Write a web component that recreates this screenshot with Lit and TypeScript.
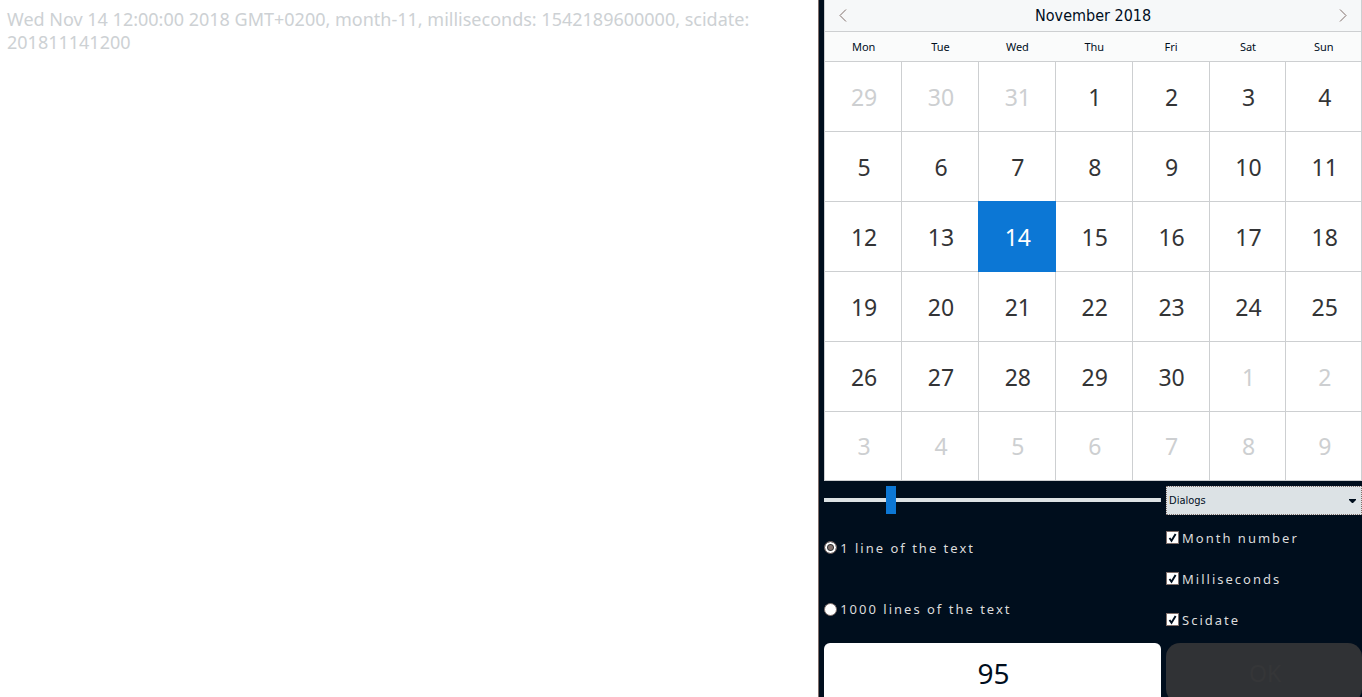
import { LitElement, html, css } from "lit";
import { customElement, state } from "lit/decorators.js";
import { classMap } from "lit/directives/class-map.js";

const WEEKDAYS = ["Mon", "Tue", "Wed", "Thu", "Fri", "Sat", "Sun"];

@customElement("month-calendar")
export class MonthCalendar extends LitElement {
  @state() selected = 14;

  static styles = css`
    :host {
      display: flex;
      flex-direction: column;
      background: #fff;
      color: #000e1d;
      border: 1px solid #cdcfd1;
      border-top: none;
    }
    .bar {
      display: flex;
      align-items: center;
      justify-content: space-between;
      height: 32px;
      box-sizing: border-box;
      padding: 0 12px;
      background: #f6f8f9;
      border-bottom: 1px solid #cdcfd1;
    }
    .title {
      margin: 0;
      font-family: Tahoma, "DejaVu Sans Condensed", sans-serif;
      font-size: 16px;
      line-height: 30px;
      font-weight: 400;
    }
    .nav {
      display: flex;
      border: none;
      background: none;
      padding: 0;
      width: 12px;
      justify-content: center;
    }
    table {
      width: 100%;
      flex: 1;
      table-layout: fixed;
      border-collapse: separate;
      border-spacing: 0;
    }
    th {
      width: 14.35%;
      height: 30px;
      box-sizing: border-box;
      padding: 0;
      background: #fafbfb;
      border-bottom: 1px solid #cdcfd1;
      font-size: 11px;
      font-weight: 400;
      line-height: 28px;
    }
    th:last-child {
      width: auto;
    }
    td {
      padding: 0;
      border-right: 1px solid #cdcfd1;
      border-bottom: 1px solid #cdcfd1;
    }
    td:last-child {
      border-right: none;
    }
    tbody tr:last-child td {
      border-bottom: none;
    }
    .day {
      display: block;
      width: 100%;
      height: 69px;
      border: none;
      padding: 0 0 0 2px;
      background: none;
      color: #333436;
      font: inherit;
      font-size: 23px;
    }
    tbody tr:last-child .day {
      height: 68px;
    }
    .day.other {
      color: #cdcfd1;
    }
    .day.selected {
      background: #0c77d5;
      color: #fff;
      box-shadow: 0 0 0 1px #0c77d5;
      position: relative;
    }
  `;

  private weeks() {
    const days = Array.from({ length: 42 }, (_, i) => {
      if (i < 3) return { n: 29 + i, other: true };
      if (i < 33) return { n: i - 2, other: false };
      return { n: i - 32, other: true };
    });
    return Array.from({ length: 6 }, (_, w) => days.slice(w * 7, w * 7 + 7));
  }

  render() {
    return html`
      <div class="bar">
        <button class="nav" aria-label="Previous month">
          <svg width="8" height="13" viewBox="0 0 8 13" fill="none" stroke="#806f6b">
            <path d="M7 .5 1 6.5 7 12.5" />
          </svg>
        </button>
        <h2 class="title">November 2018</h2>
        <button class="nav" aria-label="Next month">
          <svg width="8" height="13" viewBox="0 0 8 13" fill="none" stroke="#806f6b">
            <path d="M1 .5 7 6.5 1 12.5" />
          </svg>
        </button>
      </div>
      <table>
        <thead>
          <tr>${WEEKDAYS.map((d) => html`<th scope="col">${d}</th>`)}</tr>
        </thead>
        <tbody>
          ${this.weeks().map(
            (week) => html`<tr>
              ${week.map(
                ({ n, other }) => html`<td>
                  <button
                    class=${classMap({ day: true, other, selected: !other && n === this.selected })}
                    @click=${() => { if (!other) this.selected = n; }}
                  >${n}</button>
                </td>`
              )}
            </tr>`
          )}
        </tbody>
      </table>
    `;
  }
}

@customElement("app-root")
export class AppRoot extends LitElement {
  @state() size = 95;

  static styles = css`
    :host {
      display: grid;
      grid-template-columns: calc(60% + 1px) 1fr;
      height: 100vh;
      overflow: hidden;
      background: #fff;
      font-family: Tahoma, "Noto Sans", sans-serif;
    }
    .log {
      padding: 8px 7px;
      color: #cdd1d4;
      font-size: 18px;
      line-height: 23px;
    }
    .log p {
      margin: 0;
    }
    .side {
      background: #000e1d;
      border-left: 1px solid #806f6b;
      padding-left: 5px;
    }
    .controls {
      display: grid;
      grid-template-columns: 337fr 196fr;
      column-gap: 5px;
      padding-top: 5px;
    }
    .slider {
      appearance: none;
      width: 100%;
      height: 28px;
      margin: 0;
      background: linear-gradient(#dce2e5, #dce2e5) center / 100% 4px no-repeat;
    }
    .slider::-webkit-slider-thumb {
      appearance: none;
      width: 10px;
      height: 28px;
      background: #0c77d5;
    }
    .select {
      display: grid;
      align-items: center;
      height: 29px;
    }
    .select select,
    .select svg {
      grid-area: 1 / 1;
    }
    .select select {
      appearance: none;
      width: 100%;
      height: 29px;
      padding: 0 2px;
      border: 1px dotted #806f6b;
      border-radius: 0;
      background: #dce2e5;
      color: #000e1d;
      font-family: Tahoma, "DejaVu Sans Condensed", sans-serif;
      font-size: 11px;
    }
    .select svg {
      justify-self: end;
      margin-right: 6px;
      pointer-events: none;
    }
    .options {
      display: grid;
      grid-auto-rows: 1fr;
      height: 123px;
      margin: 2px 0 3px;
      padding: 0;
      border: none;
      min-width: 0;
    }
    .option {
      display: flex;
      align-items: center;
      gap: 3px;
      color: #dcdcdc;
      font-size: 13px;
      letter-spacing: 2px;
    }
    .option input {
      appearance: none;
      flex: none;
      width: 13px;
      height: 13px;
      margin: 0;
      border: 1px solid #806f6b;
      background: #fff;
    }
    .option input[type="radio"] {
      border-radius: 50%;
    }
    .option input[type="radio"]:checked {
      background: radial-gradient(circle, #806f6b 0 2px, #333436 3px, #fff 4px) padding-box;
    }
    .option input[type="checkbox"]:checked {
      background: #fff
        url("data:image/svg+xml,%3Csvg xmlns='http://www.w3.org/2000/svg' viewBox='0 0 11 11'%3E%3Cpath d='M2.5 6 4.5 8.8 8.6 2' fill='none' stroke='%23000e1d' stroke-width='1.9'/%3E%3C/svg%3E")
        center / 11px 11px no-repeat;
    }
    .value,
    .ok {
      box-sizing: border-box;
      width: 100%;
      height: 60px;
      border: none;
      padding: 0 0 0 2px;
      font-family: inherit;
      font-size: 28px;
      text-align: center;
    }
    .value {
      border-radius: 6px;
      background: #fff;
      color: #000e1d;
    }
    .ok {
      border-radius: 14px;
      background: #303235;
      color: #353638;
      font-size: 23px;
    }
  `;

  render() {
    return html`
      <main class="log">
        <p>Wed Nov 14 12:00:00 2018 GMT+0200, month-11, milliseconds: 1542189600000, scidate: 201811141200</p>
      </main>
      <aside class="side">
        <month-calendar></month-calendar>
        <div class="controls">
          <input
            class="slider"
            type="range"
            aria-label="Size"
            min="0"
            max="500"
            .value=${String(this.size)}
            @input=${(e: Event) => (this.size = Number((e.target as HTMLInputElement).value))}
          />
          <div class="select">
            <select aria-label="Category"><option>Dialogs</option></select>
            <svg width="7" height="4" viewBox="0 0 7 4" fill="#000e1d"><path d="M0 0h7v1L4 4H3L0 1z" /></svg>
          </div>
          <fieldset class="options" aria-label="Text length">
            <label class="option"><input type="radio" name="lines" checked />1 line of the text</label>
            <label class="option"><input type="radio" name="lines" />1000 lines of the text</label>
          </fieldset>
          <fieldset class="options" aria-label="Date parts">
            <label class="option"><input type="checkbox" checked />Month number</label>
            <label class="option"><input type="checkbox" checked />Milliseconds</label>
            <label class="option"><input type="checkbox" checked />Scidate</label>
          </fieldset>
          <input class="value" type="text" aria-label="Value" .value=${String(this.size)} />
          <button class="ok" disabled>OK</button>
        </div>
      </aside>
    `;
  }
}
